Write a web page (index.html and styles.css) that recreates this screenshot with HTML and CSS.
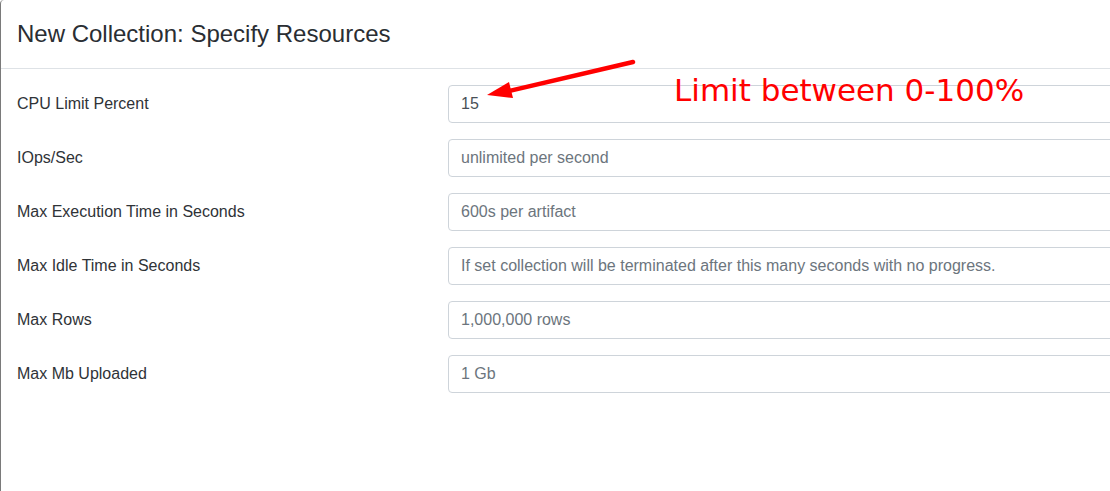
FILE: index.html
```html
<!DOCTYPE html>
<html>
<head>
<meta charset="utf-8">
<link rel="stylesheet" href="styles.css">
</head>
<body>
<div class="modal">
  <div class="modal-header">
    <h5 class="modal-title">New Collection: Specify Resources</h5>
  </div>
  <div class="modal-body">
    <div class="form-row">
      <label class="form-label">CPU Limit Percent</label>
      <input class="form-control" type="text" value="15">
    </div>
    <div class="form-row">
      <label class="form-label">IOps/Sec</label>
      <input class="form-control" type="text" placeholder="unlimited per second">
    </div>
    <div class="form-row">
      <label class="form-label">Max Execution Time in Seconds</label>
      <input class="form-control" type="text" placeholder="600s per artifact">
    </div>
    <div class="form-row">
      <label class="form-label">Max Idle Time in Seconds</label>
      <input class="form-control" type="text" placeholder="If set collection will be terminated after this many seconds with no progress.">
    </div>
    <div class="form-row">
      <label class="form-label">Max Rows</label>
      <input class="form-control" type="text" placeholder="1,000,000 rows">
    </div>
    <div class="form-row">
      <label class="form-label">Max Mb Uploaded</label>
      <input class="form-control" type="text" placeholder="1 Gb">
    </div>
  </div>
  <svg class="arrow" width="160" height="50" viewBox="0 0 160 50">
    <line x1="153" y1="12" x2="25" y2="42" stroke="#ff0000" stroke-width="4.5" stroke-linecap="round"/>
    <polygon points="7,45 29,32 33,48" fill="#ff0000"/>
  </svg>
  <div class="note">Limit between 0-100%</div>
</div>
</body>
</html>
```
FILE: styles.css
```css
* { box-sizing: border-box; }
html, body {
  margin: 0;
  padding: 0;
  background: #ffffff;
  overflow: hidden;
}
body {
  width: 1110px;
  height: 491px;
  font-family: "Liberation Sans", Arial, sans-serif;
  color: #212529;
}
.modal {
  position: relative;
  height: 491px;
  background: #fff;
  border-left: 1px solid #7a7a7a;
  border-top-left-radius: 4px;
  overflow: hidden;
}
.modal-header {
  padding: 16px 16px;
  border-bottom: 1px solid #dee2e6;
}
.modal-title {
  margin: 0;
  font-size: 24px;
  font-weight: 400;
  line-height: 36px;
  color: #2a2e33;
}
.modal-body {
  padding: 16px 0 16px 16px;
  display: flex;
  flex-direction: column;
  gap: 16px;
}
.form-row {
  display: flex;
  align-items: flex-start;
}
.form-label {
  width: 431px;
  flex: none;
  font-size: 16px;
  line-height: 24px;
  padding-top: 7px;
  padding-bottom: 7px;
  color: #2f3337;
}
.form-control {
  flex: none;
  width: 720px;
  height: 38px;
  padding: 6px 12px;
  font-family: "Liberation Sans", Arial, sans-serif;
  font-size: 16px;
  line-height: 24px;
  color: #495057;
  background: #fff;
  border: 1px solid #ced4da;
  border-radius: 4px;
  outline: none;
}
.form-control::placeholder {
  color: #6c757d;
  opacity: 1;
}
.arrow {
  position: absolute;
  left: 479px;
  top: 50px;
}
.note {
  position: absolute;
  left: 673px;
  top: 70px;
  font-family: "DejaVu Sans", sans-serif;
  font-size: 31px;
  line-height: 40px;
  color: #ff0000;
  white-space: nowrap;
}
```
